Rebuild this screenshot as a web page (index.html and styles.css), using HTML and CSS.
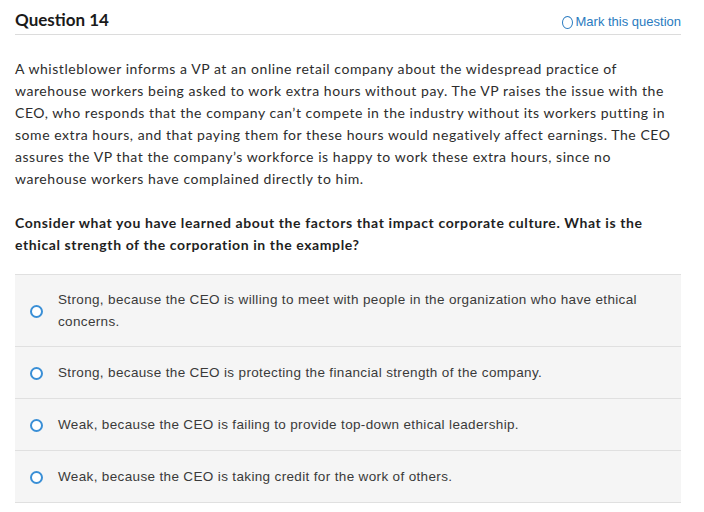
FILE: index.html
```html
<!DOCTYPE html>
<html>
<head>
<meta charset="utf-8">
<link rel="stylesheet" href="styles.css">
</head>
<body>
<div class="page">
  <div class="header">
    <h2 class="title">Question 14</h2>
    <a class="mark"><span class="mark-circle"></span>Mark this question</a>
  </div>
  <p class="stem">A whistleblower informs a VP at an online retail company about the widespread practice of warehouse workers being asked to work extra hours without pay. The VP raises the issue with the CEO, who responds that the company can’t compete in the industry without its workers putting in some extra hours, and that paying them for these hours would negatively affect earnings. The CEO assures the VP that the company’s workforce is happy to work these extra hours, since no warehouse workers have complained directly to him.</p>
  <p class="prompt">Consider what you have learned about the factors that impact corporate culture. What is the ethical strength of the corporation in the example?</p>
  <div class="options">
    <label class="option"><span class="radio"></span><span class="opt-text">Strong, because the CEO is willing to meet with people in the organization who have ethical concerns.</span></label>
    <label class="option"><span class="radio"></span><span class="opt-text">Strong, because the CEO is protecting the financial strength of the company.</span></label>
    <label class="option"><span class="radio"></span><span class="opt-text">Weak, because the CEO is failing to provide top-down ethical leadership.</span></label>
    <label class="option"><span class="radio"></span><span class="opt-text">Weak, because the CEO is taking credit for the work of others.</span></label>
  </div>
</div>
</body>
</html>
```
FILE: styles.css
```css
html, body { margin: 0; padding: 0; background: #fff; }
.page {
  width: 666px;
  margin-left: 15px;
  padding-top: 11px;
  font-family: Lato, "Open Sans", sans-serif;
  color: #333;
}
.header {
  display: flex;
  justify-content: space-between;
  align-items: flex-end;
  border-bottom: 1px solid #dcdcdc;
  padding-bottom: 5px;
}
.title {
  margin: 0;
  font-family: Lato, sans-serif;
  font-weight: 700;
  font-size: 17px;
  line-height: 18px;
  color: #1a1a1a;
}
.mark {
  display: flex;
  align-items: center;
  gap: 3px;
  font-family: "Liberation Sans", Arial, sans-serif;
  font-size: 13px;
  color: #2a7bc0;
  line-height: 14px;
}
.mark-circle {
  width: 11px;
  height: 13px;
  border: 1.5px solid #2a7bc0;
  border-radius: 50%;
  box-sizing: border-box;
}
.stem {
  margin: 23px 0 0;
  font-size: 14px;
  line-height: 22px;
  letter-spacing: 0.55px;
  color: #2d2d2d;
}
.prompt {
  margin: 22px 0 0;
  font-size: 14px;
  line-height: 22px;
  letter-spacing: 0.6px;
  font-weight: 700;
  color: #1f1f1f;
}
.options {
  margin-top: 18px;
  border-top: 1px solid #e0e0e0;
}
.option {
  display: flex;
  align-items: center;
  background: #f5f5f5;
  border-bottom: 1px solid #e0e0e0;
  padding: 14px 0 13px;
  min-height: 24px;
}
.radio {
  flex: none;
  width: 13px;
  height: 13px;
  border: 2px solid #3a8fd6;
  border-radius: 50%;
  box-sizing: border-box;
  background: #fff;
  margin-left: 15px;
  margin-right: 15px;
}
.opt-text {
  font-family: "Liberation Sans", Arial, sans-serif;
  font-size: 13.5px;
  line-height: 22px;
  letter-spacing: 0.35px;
  color: #3a3a3a;
  padding-right: 40px;
}
```
